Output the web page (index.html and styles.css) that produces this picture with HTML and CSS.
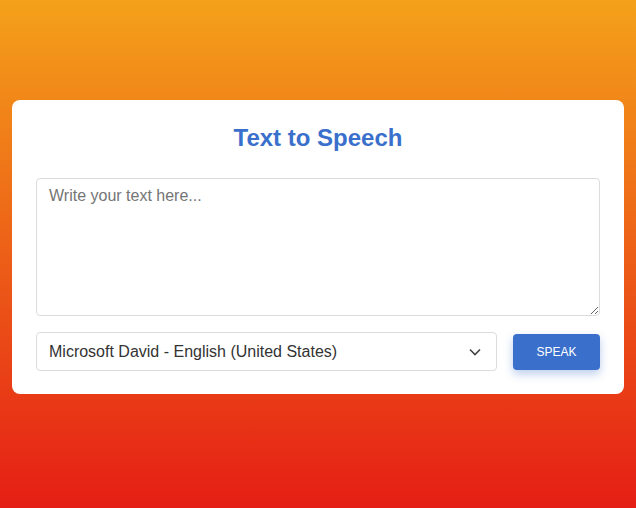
FILE: index.html
```html
<!DOCTYPE html>
<html lang="en">
<head>
<meta charset="utf-8">
<title>Text to Speech</title>
<link rel="stylesheet" href="styles.css">
</head>
<body>
<main class="card">
  <h1 class="title">Text to Speech</h1>
  <textarea class="text-input" placeholder="Write your text here..."></textarea>
  <div class="controls">
    <select class="voice-select">
      <option>Microsoft David - English (United States)</option>
    </select>
    <button class="speak-btn" type="button">SPEAK</button>
  </div>
</main>
</body>
</html>
```
FILE: styles.css
```css
html, body {
  margin: 0;
  height: 100%;
}
body {
  background: linear-gradient(to bottom, #f4a11a, #e51e15);
  font-family: "Liberation Sans", Arial, sans-serif;
  padding: 100px 12px 0;
  box-sizing: border-box;
}
.card {
  background: #fff;
  border-radius: 8px;
  padding: 24px 24px 23px;
  box-sizing: border-box;
}
.title {
  margin: 0 0 26px;
  font-size: 24px;
  line-height: 28px;
  font-weight: bold;
  color: #3a6fcc;
  text-align: center;
}
.text-input {
  display: block;
  width: 100%;
  height: 138px;
  box-sizing: border-box;
  border: 1px solid #dcdcdc;
  border-radius: 4px;
  padding: 8px 12px;
  font-family: "Liberation Sans", Arial, sans-serif;
  font-size: 16px;
  color: #333;
  margin: 0;
}
.text-input::placeholder {
  color: #757575;
}
.controls {
  display: flex;
  align-items: center;
  gap: 16px;
  margin-top: 16px;
}
.voice-select {
  flex: 1;
  height: 39px;
  border: 1px solid #dcdcdc;
  border-radius: 4px;
  padding: 0 12px;
  font-family: "Liberation Sans", Arial, sans-serif;
  font-size: 16px;
  color: #333;
  background: #fff url("data:image/svg+xml;utf8,<svg xmlns='http://www.w3.org/2000/svg' width='12' height='8' viewBox='0 0 12 8'><path d='M1 1.5l5 5 5-5' fill='none' stroke='%23444' stroke-width='1.6'/></svg>") no-repeat right 15px center;
  appearance: none;
  -webkit-appearance: none;
  margin: 0;
}
.speak-btn {
  width: 87px;
  height: 36px;
  border: none;
  border-radius: 4px;
  background: #3b6fcc;
  color: #fff;
  font-family: "Liberation Sans", Arial, sans-serif;
  font-size: 12px;
  box-shadow: 0 4px 10px rgba(59, 111, 204, 0.35);
  padding: 0;
  cursor: pointer;
}
```
